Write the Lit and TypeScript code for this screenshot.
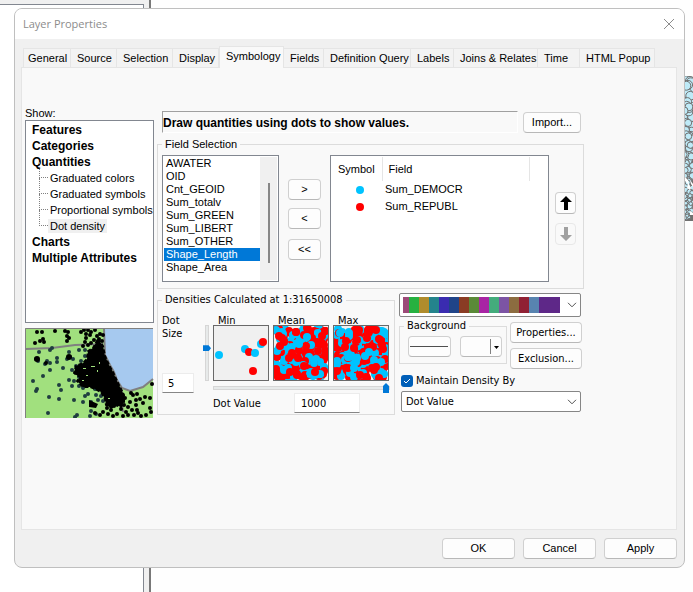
import { LitElement, html, svg, css } from "lit";
import { customElement, state } from "lit/decorators.js";
import { classMap } from "lit/directives/class-map.js";

const TABS = [
  "General", "Source", "Selection", "Display", "Symbology", "Fields",
  "Definition Query", "Labels", "Joins & Relates", "Time", "HTML Popup",
];

const FIELDS = [
  "AWATER", "OID", "Cnt_GEOID", "Sum_totalv", "Sum_GREEN",
  "Sum_LIBERT", "Sum_OTHER", "Shape_Length", "Shape_Area",
];

const TREE: { name: string; children?: string[] }[] = [
  { name: "Features" },
  { name: "Categories" },
  {
    name: "Quantities",
    children: ["Graduated colors", "Graduated symbols", "Proportional symbols", "Dot density"],
  },
  { name: "Charts" },
  { name: "Multiple Attributes" },
];

const BLUE = "#00c3ff";
const RED = "#ff0000";

/** Small repeatable generator, so that the samples look the same on every draw. */
function generator(seed: number) {
  let a = seed;
  return () => {
    a = (a + 0x6d2b79f5) | 0;
    let t = Math.imul(a ^ (a >>> 15), 1 | a);
    t = (t + Math.imul(t ^ (t >>> 7), 61 | t)) ^ t;
    return ((t ^ (t >>> 14)) >>> 0) / 4294967296;
  };
}

function denseDots(seed: number) {
  const next = generator(seed);
  return Array.from({ length: 300 }, () => ({
    x: Math.round(next() * 50) + 2,
    y: Math.round(next() * 50) + 2,
    color: next() > 0.47 ? RED : BLUE,
  }));
}

const SAMPLES = [
  {
    name: "Min",
    dots: [
      { x: 5, y: 29, color: BLUE }, { x: 31, y: 23, color: BLUE },
      { x: 35, y: 26, color: RED }, { x: 41, y: 27, color: BLUE },
      { x: 47, y: 18, color: BLUE }, { x: 49, y: 16, color: RED },
      { x: 39, y: 45, color: RED },
    ],
  },
  { name: "Mean", dots: denseDots(7) },
  { name: "Max", dots: denseDots(91) },
];

/* Sparse dots of the county preview: x, y pairs. */
const PREVIEW_BLACK = [
  12, 4, 17, 4, 18, 11, 15, 13, 19, 14, 10, 15, 30, 3, 40, 3, 43, 4, 42, 8, 44, 10, 42, 13,
  59, 2, 63, 2, 66, 4, 70, 2, 61, 6, 65, 7, 75, 6, 74, 11, 69, 12, 60, 14, 63, 17, 58, 18,
  66, 15, 78, 7, 72, 8, 61, 10, 77, 13, 56, 4, 108, 67, 112, 66, 115, 71, 111, 72, 120, 69,
  125, 70, 118, 75, 111, 77, 105, 74, 103, 79, 112, 82, 126, 84, 121, 87, 116, 88, 107, 82,
  101, 84, 96, 81, 92, 86, 86, 82, 89, 78, 98, 88, 103, 87, 83, 86, 78, 84, 127, 56, 125, 80,
  109, 87, 94, 76, 88, 88, 97, 73, 100, 70, 106, 65, 82, 80, 75, 87, 70, 85, 113, 85, 99, 77,
];
const PREVIEW_DARK = [
  14, 24, 25, 22, 27, 20, 11, 31, 13, 33, 20, 36, 22, 33, 25, 35, 32, 30, 32, 34, 25, 42, 18, 48,
  38, 40, 44, 24, 45, 29, 42, 31, 48, 31, 54, 22, 60, 22, 60, 28, 51, 38, 47, 42, 53, 44, 8, 53,
  12, 61, 11, 63, 34, 57, 36, 62, 44, 52, 49, 53, 47, 58, 24, 69, 34, 71, 49, 72, 58, 74, 23, 85,
  52, 87, 50, 89, 60, 68, 66, 74, 69, 77, 71, 86, 66, 83, 54, 58, 58, 60, 63, 66, 70, 61, 73, 72,
  78, 73, 65, 88, 67, 36, 56, 33, 60, 37, 54, 49, 58, 54, 64, 57, 76, 68, 71, 67,
];

function pairs(list: number[]) {
  const out: { x: number; y: number }[] = [];
  for (let i = 0; i < list.length; i += 2) out.push({ x: list[i], y: list[i + 1] });
  return out;
}

/* Census units at the edge of the map: wide in the north, crowded in the south. */
function mapCells() {
  const next = generator(23);
  return Array.from({ length: 190 }, () => {
    const t = next();
    return { x: next() * 10, y: 4 + t * 138, r: 4.5 - t * 3 + next() * 1.5 };
  }).sort((a, b) => b.r - a.r);
}

@customElement("app-root")
export class AppRoot extends LitElement {
  @state() private tab = "Symbology";
  @state() private method = "Dot density";

  static styles = css`
    :host {
      display: flex;
      flex-direction: column;
      box-sizing: border-box;
      min-height: 100vh;
      padding: 8px 8px 24px 14px;
      position: relative;
      overflow: hidden;
      background: #fefefe;
      color: #000;
      font: 11px/13px "Liberation Sans", Arial, sans-serif;
    }
    *, *::before, *::after { box-sizing: border-box; }
    button, input, select { font: inherit; color: inherit; margin: 0; }
    svg { display: block; }
    ul { list-style: none; margin: 0; padding: 0; }

    .backdrop {
      position: absolute;
      inset: 0 auto 0 0;
      width: 151px;
      padding: 4px 5px 0 0;
      background: #f0f0f0;
      border-right: 2px solid #787878;
    }
    .backdrop-pane {
      height: 100%;
      background: #fff;
      border: solid #828790;
      border-width: 1px 1px 0 0;
    }
    .map { position: absolute; top: 76px; right: 0; }

    .dialog {
      position: relative;
      flex: 1;
      display: flex;
      flex-direction: column;
      background: #f0f0f0;
      border: 1px solid #bfbfbf;
      border-radius: 8px;
      overflow: hidden;
    }
    .titlebar {
      display: flex;
      align-items: center;
      justify-content: space-between;
      height: 30px;
      padding: 0 9px 1px 8px;
      background: #fff;
      color: #8c8c8c;
    }
    .title { margin: 0; font: 11px/16px "Open Sans", "Noto Sans", sans-serif; }
    .close { padding: 0; border: 0; background: none; }

    .content { flex: 1; display: flex; flex-direction: column; padding: 7px 7px 0 6px; }
    .tabs {
      display: grid;
      grid-template-columns: 48px 46px 56px 46px 65px 40px 87px 43px 84px 42px 75px;
      align-items: end;
      padding-left: 2px;
    }
    .tab {
      height: 19px;
      padding: 0 0 0 6px;
      border: solid #e5e5e5;
      border-width: 1px 1px 0 0;
      background: #f3f3f3;
      text-align: left;
      white-space: nowrap;
    }
    .tab:first-child { border-left-width: 1px; padding-left: 4px; }
    .tab.active {
      position: relative;
      height: 22px;
      margin-bottom: -1px;
      padding-bottom: 3px;
      border-left-width: 1px;
      background: #f9f9f9;
    }
    .panel {
      flex: 1;
      display: grid;
      grid-template-columns: 129px minmax(0, 427px);
      align-content: start;
      gap: 3px;
      padding: 38px 3px 8px;
      background: #f9f9f9;
      border: 1px solid #e5e5e5;
    }

    .side { display: flex; flex-direction: column; }
    .side-label { line-height: 14px; }
    .tree {
      height: 203px;
      padding: 1px 6px;
      margin-bottom: 5px;
      background: #fff;
      border: 1px solid #828790;
      line-height: 16px;
    }
    .node { padding: 0; border: 0; background: none; white-space: nowrap; }
    .group { display: block; font-weight: bold; font-size: 12px; line-height: 16px; }
    .leaf { display: flex; align-items: center; height: 16px; padding-left: 7px; }
    .leaf::before {
      content: "";
      flex: none;
      align-self: flex-start;
      width: 9px;
      height: 16px;
      margin-top: -8px;
      border: dotted #808080;
      border-width: 0 0 1px 1px;
    }
    .leaf .node { height: 14px; padding: 0 2px; line-height: 14px; }
    .node.current { background: #f0f0f0; }
    .preview { width: 100%; }

    .main { display: flex; flex-direction: column; padding-top: 5px; }
    .headline { display: flex; gap: 5px; padding: 0 3px 0 5px; margin-bottom: 4px; }
    .description {
      flex: 1;
      height: 22px;
      margin: 0;
      border: solid #a0a0a0;
      border-width: 1px 0 0 1px;
      border-right: 1px solid #fff;
      border-bottom: 1px solid #fff;
      font-size: 12px;
      font-weight: bold;
      line-height: 23px;
      white-space: nowrap;
    }
    .btn {
      display: inline-flex;
      align-items: center;
      justify-content: center;
      height: 21px;
      padding: 0;
      border: 1px solid #d0d0d0;
      border-bottom-color: #b8b8b8;
      border-radius: 4px;
      background: #fdfdfd;
      white-space: nowrap;
    }
    .import { width: 58px; margin-top: 1px; }

    .box { margin: 0; padding: 0; border: 1px solid #dcdcdc; min-width: 0; }
    .box legend { margin-left: 4px; padding: 0 3px; line-height: 14px; height: 14px; }

    .selection { display: flex; padding: 4px 4px 6px; }
    .list {
      display: flex;
      flex: 0 0 117px;
      height: 127px;
      padding: 1px;
      background: #fff;
      border: 1px solid #828790;
    }
    .options {
      flex: 1;
      min-width: 0;
      height: 123px;
      padding: 0;
      border: 0;
      outline: 0;
      background: #fff;
      overflow: hidden;
      scrollbar-width: none;
    }
    .options option { height: 13px; min-height: 13px; padding: 0 2px; line-height: 13px; }
    .options option:checked {
      background: linear-gradient(#0078d7, #0078d7);
      -webkit-text-fill-color: #fff;
    }
    .scroll { flex: 0 0 17px; padding: 26px 7px 0 8px; background: #f0f0f0; }
    .scroll-thumb { height: 80px; background: #868686; }
    .movers { display: flex; flex-direction: column; gap: 8px; width: 33px; margin: 24px 9px 0; }
    .movers .btn:last-child { margin-top: 2px; }
    .chosen {
      flex: 1;
      height: 127px;
      padding: 1px;
      background: #fff;
      border: 1px solid #828790;
    }
    .chosen table { width: 100%; border-collapse: collapse; table-layout: fixed; }
    .chosen th { height: 24px; padding: 0 6px; font-weight: normal; text-align: left; border-right: 1px solid #e5e5e5; }
    .chosen th:last-child { border: 0; }
    .chosen td { height: 17px; padding: 0 3px; }
    .col-symbol { width: 50px; }
    .col-field { width: 147px; }
    .dot { width: 8px; height: 8px; margin-left: 21px; border-radius: 50%; }
    .dot-blue { background: #00c3ff; }
    .dot-red { background: #f00; }
    .order { display: flex; flex-direction: column; gap: 9px; width: 21px; margin: 37px 3px 0 6px; }
    .order .btn { height: 22px; }
    .btn:disabled { border-color: #e8e8e8; background: #f9f9f9; }

    .lower {
      display: grid;
      grid-template-columns: 238px minmax(0, 1fr);
      gap: 4px;
      align-items: start;
      margin-top: 4px;
      font: 11px/13px "DejaVu Sans Condensed", "DejaVu Sans", sans-serif;
    }
    .densities { display: flex; padding: 7px 4px 1px; }
    .size { display: flex; flex-direction: column; justify-content: space-between; width: 34px; height: 79px; }
    .size-label { width: 26px; }
    .entry {
      height: 20px;
      padding: 0 6px;
      background: #fff;
      border: 1px solid #ececec;
      border-bottom-color: #868686;
      outline: 0;
    }
    .entry-size { width: 32px; padding: 0 5px; }
    .entry-value { width: 66px; }
    .range { appearance: none; background: none; outline: 0; }
    .range-v {
      writing-mode: vertical-lr;
      direction: rtl;
      width: 8px;
      height: 56px;
      margin: 11px 2px 0 7px;
    }
    .range-v::-webkit-slider-runnable-track { width: 4px; height: 56px; background: #e7eaea; border: 1px solid #d6d6d6; }
    .range-v::-webkit-slider-thumb {
      appearance: none;
      width: 8px;
      height: 6px;
      margin-left: -3px;
      background: #0078d7;
      clip-path: polygon(0 0, 70% 0, 100% 50%, 70% 100%, 0 100%);
    }
    .range-h { display: block; width: 100%; height: 10px; margin: 2px 0 0; }
    .range-h::-webkit-slider-runnable-track { height: 4px; background: #e7eaea; border: 1px solid #d6d6d6; }
    .range-h::-webkit-slider-thumb {
      appearance: none;
      width: 6px;
      height: 10px;
      margin-top: -4px;
      background: #0078d7;
      clip-path: polygon(0 30%, 50% 0, 100% 30%, 100% 100%, 0 100%);
    }
    .density-view { flex: 1; }
    .samples { display: grid; grid-template-columns: repeat(3, 56px); gap: 4px; }
    .sample { margin: 0; }
    .sample figcaption { height: 11px; padding-left: 5px; }
    .sample svg { border: 1px solid #696969; background: #f0f0f0; }
    .value { display: flex; align-items: center; justify-content: space-between; width: 147px; }

    .options-side { display: flex; flex-direction: column; }
    .pick { position: relative; height: 21px; }
    .pick select {
      display: block;
      appearance: none;
      width: 100%;
      height: 100%;
      padding: 0 20px 0 4px;
      border: 1px solid #868686;
      border-radius: 2px;
      background: #fff;
    }
    .pick svg { position: absolute; top: 50%; right: 4px; margin-top: -3px; pointer-events: none; }
    .pick.ramp { height: 24px; margin-right: 3px; }
    .pick.ramp select {
      background: linear-gradient(90deg,
        #9c4a78 0 6px, #26b140 6px 16px, #b08c2c 16px 26px, #24848c 26px 36px, #3a2cb0 36px 46px,
        #204488 46px 56px, #8a3c24 56px 66px, #5a8a38 66px 76px, #a824a4 76px 86px, #44ac7c 86px 96px,
        #7c54a4 96px 106px, #8c6c40 106px 116px, #902034 116px 126px, #5884b0 126px 136px, #5e2888 136px)
        3px 3px / 157px 16px no-repeat #fff;
    }
    .pair { display: flex; align-items: flex-start; gap: 3px; margin-top: 2px; }
    .background { display: flex; gap: 9px; width: 106px; padding: 3px 4px 6px 8px; }
    .background .btn { flex: 1; min-width: 0; }
    .actions { display: flex; flex-direction: column; gap: 5px; flex: 1; padding-top: 3px; margin-right: 2px; }
    .check { display: flex; align-items: center; gap: 3px; height: 15px; margin: 4px 0 3px 2px; }
    .check input {
      appearance: none;
      width: 12px;
      height: 12px;
      border-radius: 3px;
      background: #005fb8;
    }
    .tick { position: relative; display: block; height: 12px; }
    .tick svg { position: absolute; inset: 0; pointer-events: none; }
    .by { margin: 0 3px 0 2px; }

    .footer { display: flex; justify-content: flex-end; gap: 8px; padding: 8px 7px; }
    .footer .btn { width: 73px; }
  `;

  private chevron() {
    return html`<svg width="10" height="6" viewBox="0 0 10 6" fill="none" stroke="#505050">
      <path d="M1 .8 5 4.8 9 .8" />
    </svg>`;
  }

  private node(name: string, group: boolean) {
    return html`<button
      class=${classMap({ node: true, group, current: name === this.method })}
      @click=${() => (this.method = name)}
    >${name}</button>`;
  }

  private renderPreview() {
    return html`<svg class="preview" width="129" height="90" viewBox="0 0 129 90" preserveAspectRatio="none" role="img" aria-label="Dot density preview">
      <rect width="128" height="90" fill="#a1e07e" />
      <path d="M79 1 80 27 85 37 89 44 92 52 97 60 105 63 118 59 128 51V1Z" fill="#a6c9ef" />
      <path d="M79 1 80 27 85 37 89 44 92 52 97 60 105 63 118 59 128 51" fill="none" stroke="#808080" stroke-width="2" />
      <path d="M1 21 27 20 50 17 78 16M97 62 96 68 98 84" fill="none" stroke="#808080" stroke-width="2" />
      <g fill="#1f3d40">${pairs(PREVIEW_DARK).map((p) => svg`<circle cx=${p.x} cy=${p.y} r="2" />`)}</g>
      <path d="M73 11 78 18 80 28 84 37 88 44 92 53 96 61 99 67 99 74 96 79 90 77 86 80 81 77 80 71 76 64 70 61 65 59 58 59 52 53 55 49 49 45 51 38 58 35 62 31 63 23 68 20Z" fill="#000" stroke="#000" stroke-width="2" stroke-linejoin="round" stroke-dasharray="4 2" />
      <g fill="#000">
        ${pairs(PREVIEW_BLACK).map((p) => svg`<circle cx=${p.x} cy=${p.y} r="2" />`)}
        <circle cx="12" cy="31" r="3" /><circle cx="44" cy="29" r="3" /><circle cx="21" cy="35" r="2" />
        <path d="m64 72 9 4-2 4-7-1zM50 41l8 2-2 6-7-3z" />
      </g>
      <g fill="#a1e07e"><path d="M58 40h3v1h-3zM66 38h4v1h-4zM72 42h1v2h-1zM61 47h2v1h-2zM57 52h2v1h-2zM74 34h1v2h-1zM83 70h2v1h-2z" /></g>
      <path d="M.5 90V.5H128" fill="none" stroke="#808080" />
    </svg>`;
  }

  render() {
    return html`
      <div class="backdrop"><div class="backdrop-pane"></div></div>
      <svg class="map" width="10" height="146" viewBox="0 0 10 146" aria-hidden="true">
        <path d="M2 4 9 1h1v144H0V6z" fill="#707070" />
        ${mapCells().map((c) => svg`<circle cx=${c.x} cy=${c.y} r=${c.r} fill="#beeaf7" stroke="#707070" stroke-width="1" />`)}
        <path d="M2 101 5 104 6 108 8 112 7 114 4 112 5 108 2 105zM7 104 10 108V111L8 108zM7 135 10 137V139H7z" fill="#fff" />
      </svg>

      <section class="dialog" role="dialog" aria-labelledby="title">
        <header class="titlebar">
          <h1 class="title" id="title">Layer Properties</h1>
          <button class="close" aria-label="Close">
            <svg width="12" height="12" viewBox="0 0 12 12" fill="none" stroke="#8c8c8c"><path d="m1 1 10 10M11 1 1 11" /></svg>
          </button>
        </header>

        <div class="content">
          <div class="tabs" role="tablist">
            ${TABS.map((t) => html`<button role="tab" aria-selected=${t === this.tab}
              class=${classMap({ tab: true, active: t === this.tab })}
              @click=${() => (this.tab = t)}>${t}</button>`)}
          </div>

          <div class="panel" role="tabpanel">
            <div class="side">
              <span class="side-label">Show:</span>
              <ul class="tree">
                ${TREE.map((g) => html`<li>
                  ${this.node(g.name, true)}
                  ${g.children
                    ? html`<ul>${g.children.map((c) => html`<li class="leaf">${this.node(c, false)}</li>`)}</ul>`
                    : null}
                </li>`)}
              </ul>
              ${this.renderPreview()}
            </div>

            <div class="main">
              <div class="headline">
                <p class="description">Draw quantities using dots to show values.</p>
                <button class="btn import">Import...</button>
              </div>

              <fieldset class="box">
                <legend>Field Selection</legend>
                <div class="selection">
                  <div class="list">
                    <select class="options" size="9" aria-label="Available fields">
                      ${FIELDS.map((f) => html`<option ?selected=${f === "Shape_Length"}>${f}</option>`)}
                    </select>
                    <div class="scroll"><div class="scroll-thumb"></div></div>
                  </div>
                  <div class="movers">
                    <button class="btn">&gt;</button>
                    <button class="btn">&lt;</button>
                    <button class="btn">&lt;&lt;</button>
                  </div>
                  <div class="chosen">
                    <table>
                      <colgroup><col class="col-symbol" /><col class="col-field" /><col /></colgroup>
                      <thead><tr><th>Symbol</th><th>Field</th><th></th></tr></thead>
                      <tbody>
                        <tr><td><div class="dot dot-blue"></div></td><td>Sum_DEMOCR</td><td></td></tr>
                        <tr><td><div class="dot dot-red"></div></td><td>Sum_REPUBL</td><td></td></tr>
                      </tbody>
                    </table>
                  </div>
                  <div class="order">
                    <button class="btn" aria-label="Move up">
                      <svg width="12" height="14" viewBox="0 0 12 14"><path d="M6 0 12 6H8v8H4V6H0z" fill="#000" /></svg>
                    </button>
                    <button class="btn" aria-label="Move down" disabled>
                      <svg width="12" height="14" viewBox="0 0 12 14"><path d="M6 14 0 8h4V0h4v8h4z" fill="#a0a0a0" /></svg>
                    </button>
                  </div>
                </div>
              </fieldset>

              <div class="lower">
                <fieldset class="box">
                  <legend>Densities Calculated at 1:31650008</legend>
                  <div class="densities">
                    <div class="size">
                      <label class="size-label" for="size">Dot Size</label>
                      <input class="entry entry-size" id="size" value="5" />
                    </div>
                    <input class="range range-v" type="range" min="0" max="100" value="60" aria-label="Dot size" />
                    <div class="density-view">
                      <div class="samples">
                        ${SAMPLES.map((s) => html`<figure class="sample">
                          <figcaption>${s.name}</figcaption>
                          <svg width="56" height="56" viewBox="0 0 54 54" aria-hidden="true">
                            ${s.dots.map((d) => svg`<circle cx=${d.x} cy=${d.y} r="4" fill=${d.color} />`)}
                          </svg>
                        </figure>`)}
                      </div>
                      <input class="range range-h" type="range" min="0" max="100" value="100" aria-label="Dot value" />
                      <div class="value">
                        <label for="value">Dot Value</label>
                        <input class="entry entry-value" id="value" value="1000" />
                      </div>
                    </div>
                  </div>
                </fieldset>

                <div class="options-side">
                  <div class="pick ramp">
                    <select aria-label="Color scheme"><option></option></select>
                    ${this.chevron()}
                  </div>
                  <div class="pair">
                    <fieldset class="box">
                      <legend>Background</legend>
                      <div class="background">
                        <button class="btn" aria-label="Outline">
                          <svg width="38" height="1" viewBox="0 0 38 1"><path d="M0 .5h38" stroke="#505050" /></svg>
                        </button>
                        <button class="btn" aria-label="Fill">
                          <svg width="38" height="15" viewBox="0 0 38 15"><path d="M28.5 0V15" stroke="#808080" /><path d="M32 7h5l-2.500 3z" /></svg>
                        </button>
                      </div>
                    </fieldset>
                    <div class="actions">
                      <button class="btn">Properties...</button>
                      <button class="btn">Exclusion...</button>
                    </div>
                  </div>
                  <div class="check">
                    <span class="tick">
                      <input type="checkbox" id="maintain" checked />
                      <svg width="12" height="12" viewBox="0 0 12 12" fill="none" stroke="#fff"><path d="m3 6 2 2 4-4" /></svg>
                    </span>
                    <label for="maintain">Maintain Density By</label>
                  </div>
                  <div class="pick by">
                    <select aria-label="Maintain density by"><option>Dot Value</option></select>
                    ${this.chevron()}
                  </div>
                </div>
              </div>
            </div>
          </div>
        </div>

        <footer class="footer">
          <button class="btn">OK</button>
          <button class="btn">Cancel</button>
          <button class="btn">Apply</button>
        </footer>
      </section>
    `;
  }
}
